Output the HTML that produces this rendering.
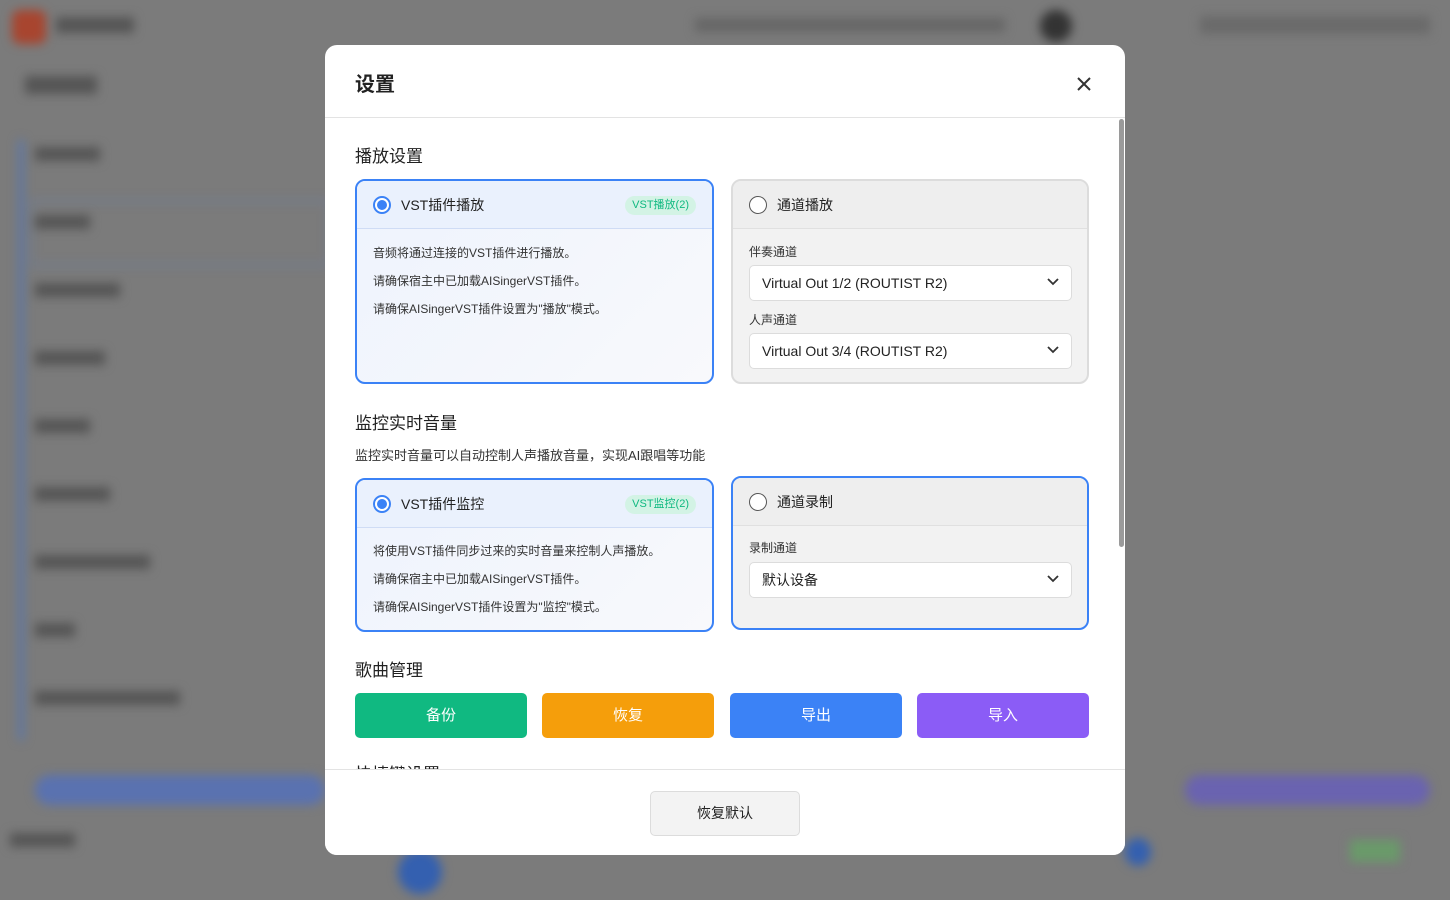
<!DOCTYPE html>
<html><head><meta charset="utf-8"><style>
*{box-sizing:border-box;margin:0;padding:0}
body{width:1450px;height:900px;overflow:hidden;background:#7b7b7b;font-family:"Liberation Sans","Noto Sans CJK SC",sans-serif;position:relative;color:#222}
.bg{position:absolute;filter:blur(5px)}
.modal{position:absolute;left:325px;top:45px;width:800px;height:810px;background:#fff;border-radius:12px;overflow:hidden}
.hd{height:73px;border-bottom:1px solid #e3e3e3;position:relative}
.hd h1{position:absolute;left:30px;top:23px;font-size:20px;font-weight:bold;color:#222}
.close{position:absolute;left:750px;top:30px}
.body{position:absolute;top:73px;left:0;width:800px;height:651px;overflow:hidden}
.sb{position:absolute;left:794px;top:74px;width:5px;height:428px;background:#9a9a9a;border-radius:3px}
.h2{position:absolute;left:30px;font-size:17px;color:#222}
.card{position:absolute;border:2px solid #3b82f6;border-radius:10px;overflow:hidden;background:linear-gradient(135deg,#eef3fd,#f8f9fc)}
.card.g{background:#f2f2f2;border-color:#dcdcdc}
.card.gb{background:#f2f2f2;border-color:#3b82f6}
.ch{height:48px;border-bottom:1px solid #cfdcf5;position:relative;background:#eaf1fd}
.g .ch,.gb .ch{background:#eeeeee;border-bottom-color:#e0e0e0}
.radio{position:absolute;left:16px;top:15px;width:18px;height:18px;border-radius:50%;border:1.5px solid #555;background:#fff}
.radio.on{border:2px solid #3b82f6}
.radio.on::after{content:"";position:absolute;left:2px;top:2px;width:10px;height:10px;border-radius:50%;background:#3b82f6}
.ct{position:absolute;left:44px;top:14px;font-size:14px;color:#222}
.badge{position:absolute;right:16px;top:15px;height:19px;padding:0 7px;border-radius:10px;background:#d3f3e5;color:#10b981;font-size:11px;line-height:19px}
.ln{position:absolute;left:16px;font-size:12px;color:#333}
.lab{position:absolute;left:16px;font-size:12px;color:#333}
.sel{position:absolute;left:16px;width:323px;height:36px;background:#fff;border:1px solid #dcdcdc;border-radius:5px;font-size:14px;line-height:34px;padding-left:12px;color:#222}
.sel svg{position:absolute;right:12px;top:12px}
.btn{position:absolute;top:575px;height:45px;width:172px;border-radius:5px;color:#fff;font-size:15px;text-align:center;line-height:45px}
.ft{position:absolute;top:724px;left:0;width:800px;height:86px;border-top:1px solid #e3e3e3;background:#fff}
.rb{position:absolute;left:325px;top:21px;width:150px;height:45px;border:1px solid #dcdcdc;border-radius:5px;background:#f3f3f3;font-size:14px;text-align:center;line-height:43px;color:#222}
</style></head><body>
<div class="bg" style="left:12px;top:10px;width:34px;height:34px;border-radius:8px;background:#a8452f"></div>
<div class="bg" style="left:56px;top:17px;width:78px;height:16px;background:#555"></div>
<div class="bg" style="left:25px;top:76px;width:72px;height:18px;background:#555"></div>
<div class="bg" style="left:1040px;top:10px;width:32px;height:32px;border-radius:50%;background:#333"></div>
<div class="bg" style="left:695px;top:18px;width:310px;height:14px;background:#666"></div>
<div class="bg" style="left:1200px;top:16px;width:230px;height:18px;background:#6a6a6a"></div>
<div class="bg" style="left:30px;top:200px;width:300px;height:66px;border:2px solid #6c7ea0"></div>
<div class="bg" style="left:18px;top:140px;width:6px;height:600px;background:#5d77a8"></div>
<div class="bg" style="left:35px;top:147px;width:65px;height:14px;background:#555"></div>
<div class="bg" style="left:35px;top:215px;width:55px;height:14px;background:#555"></div>
<div class="bg" style="left:35px;top:283px;width:85px;height:14px;background:#555"></div>
<div class="bg" style="left:35px;top:351px;width:70px;height:14px;background:#555"></div>
<div class="bg" style="left:35px;top:419px;width:55px;height:14px;background:#555"></div>
<div class="bg" style="left:35px;top:487px;width:75px;height:14px;background:#555"></div>
<div class="bg" style="left:35px;top:555px;width:115px;height:14px;background:#555"></div>
<div class="bg" style="left:35px;top:623px;width:40px;height:14px;background:#555"></div>
<div class="bg" style="left:35px;top:691px;width:145px;height:14px;background:#555"></div>
<div class="bg" style="left:35px;top:775px;width:290px;height:30px;border-radius:15px;background:#5a72b0"></div>
<div class="bg" style="left:1185px;top:775px;width:245px;height:30px;border-radius:15px;background:#6a63b0"></div>
<div class="bg" style="left:10px;top:833px;width:65px;height:14px;background:#555"></div>
<div class="bg" style="left:398px;top:850px;width:44px;height:44px;border-radius:50%;background:#3460b0"></div>
<div class="bg" style="left:1125px;top:838px;width:26px;height:28px;border-radius:50%;background:#3460b0"></div>
<div class="bg" style="left:1350px;top:840px;width:50px;height:22px;background:#6a9a6a"></div>

<div class="modal">
 <div class="hd"><h1>设置</h1>
  <svg class="close" width="18" height="18" viewBox="0 0 18 18"><path d="M3 3L15 15M15 3L3 15" stroke="#333" stroke-width="2" fill="none"/></svg></div>
 <div class="body">
  <div class="h2" style="top:24px">播放设置</div>
  <div class="card" style="left:30px;top:61px;width:359px;height:205px">
   <div class="ch"><div class="radio on"></div><div class="ct">VST插件播放</div><div class="badge">VST播放(2)</div></div>
   <div class="ln" style="top:63px">音频将通过连接的VST插件进行播放。</div>
   <div class="ln" style="top:91px">请确保宿主中已加载AISingerVST插件。</div>
   <div class="ln" style="top:119px">请确保AISingerVST插件设置为"播放"模式。</div>
  </div>
  <div class="card g" style="left:406px;top:61px;width:358px;height:205px">
   <div class="ch"><div class="radio"></div><div class="ct">通道播放</div></div>
   <div class="lab" style="top:62px">伴奏通道</div>
   <div class="sel" style="top:84px">Virtual Out 1/2 (ROUTIST R2)<svg width="12" height="8" viewBox="0 0 12 8"><path d="M1 1L6 6L11 1" stroke="#333" stroke-width="1.8" fill="none"/></svg></div>
   <div class="lab" style="top:130px">人声通道</div>
   <div class="sel" style="top:152px">Virtual Out 3/4 (ROUTIST R2)<svg width="12" height="8" viewBox="0 0 12 8"><path d="M1 1L6 6L11 1" stroke="#333" stroke-width="1.8" fill="none"/></svg></div>
  </div>
  <div class="h2" style="top:291px">监控实时音量</div>
  <div style="position:absolute;left:30px;top:327px;font-size:13px;color:#333">监控实时音量可以自动控制人声播放音量，实现AI跟唱等功能</div>
  <div class="card" style="left:30px;top:360px;width:359px;height:154px">
   <div class="ch"><div class="radio on"></div><div class="ct">VST插件监控</div><div class="badge">VST监控(2)</div></div>
   <div class="ln" style="top:62px">将使用VST插件同步过来的实时音量来控制人声播放。</div>
   <div class="ln" style="top:90px">请确保宿主中已加载AISingerVST插件。</div>
   <div class="ln" style="top:118px">请确保AISingerVST插件设置为"监控"模式。</div>
  </div>
  <div class="card gb" style="left:406px;top:358px;width:358px;height:154px">
   <div class="ch"><div class="radio"></div><div class="ct">通道录制</div></div>
   <div class="lab" style="top:61px">录制通道</div>
   <div class="sel" style="top:84px">默认设备<svg width="12" height="8" viewBox="0 0 12 8"><path d="M1 1L6 6L11 1" stroke="#333" stroke-width="1.8" fill="none"/></svg></div>
  </div>
  <div class="h2" style="top:538px">歌曲管理</div>
  <div class="btn" style="left:30px;background:#10b981">备份</div>
  <div class="btn" style="left:217px;background:#f59e0b">恢复</div>
  <div class="btn" style="left:405px;background:#3b82f6">导出</div>
  <div class="btn" style="left:592px;background:#8b5cf6">导入</div>
  <div class="h2" style="top:642px">快捷键设置</div>
 </div>
 <div class="sb"></div>
 <div class="ft"><div class="rb">恢复默认</div></div>
</div>
</body></html>
